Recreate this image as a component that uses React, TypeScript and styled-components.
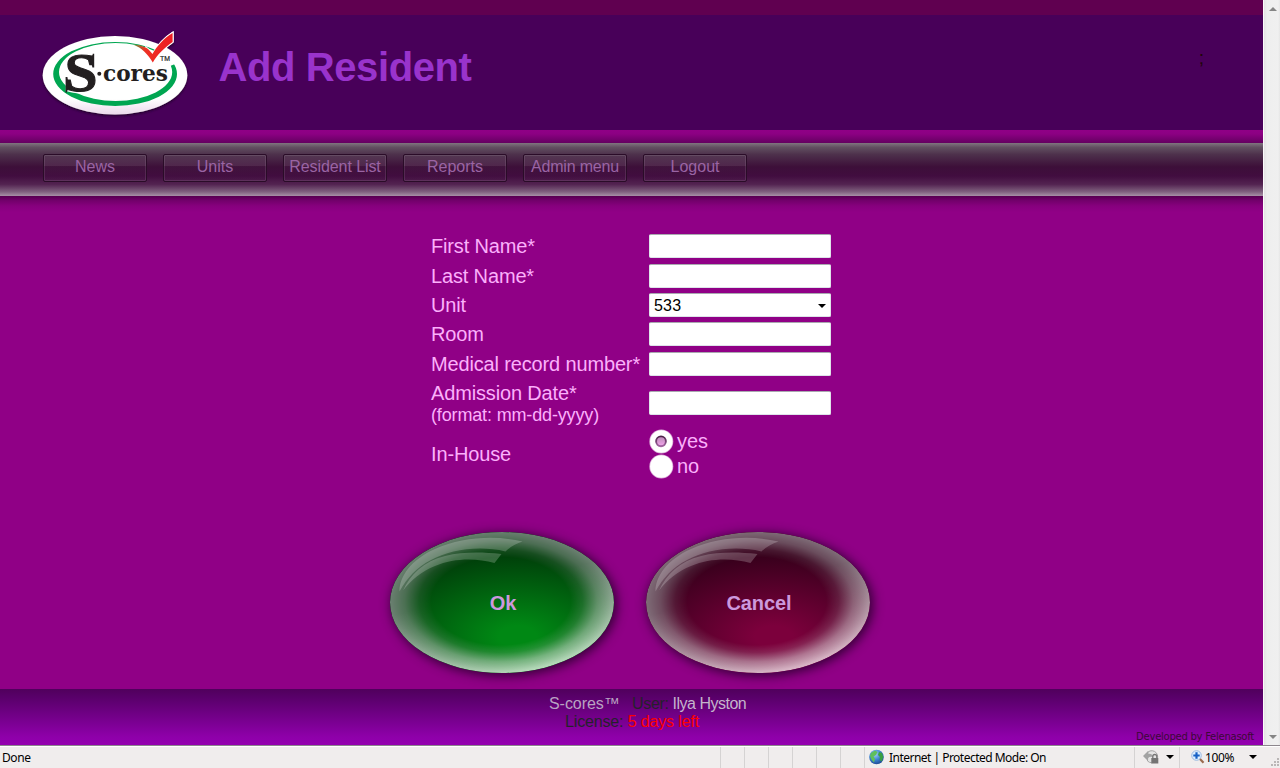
import React from "react";
import styled, { createGlobalStyle } from "styled-components";

const Global = createGlobalStyle`
  * { box-sizing: border-box; }
  body { margin: 0; overflow: hidden; background: #900086; font-family: "Liberation Sans", Arial, sans-serif; }
  button, input { font-family: inherit; padding: 0; margin: 0; }
`;

const Window = styled.div`
  display: flex;
  flex-direction: column;
  width: 1280px;
  height: 768px;
  overflow: hidden;
`;
const Viewport = styled.div`
  display: flex;
  height: 745px;
`;
const Page = styled.div`
  display: flex;
  flex-direction: column;
  width: 1263px;
  background: #900086;
`;
const TopStripe = styled.div`
  height: 15px;
  background: #600050;
`;
const Header = styled.header`
  display: flex;
  height: 115px;
  background: #480059;
  padding: 5px 59px 0 30px;
`;
const Title = styled.h1`
  margin: 24px 0 0 8.5px;
  flex: 1;
  font-size: 40px;
  line-height: 46px;
  letter-spacing: -0.4px;
  color: #9933cc;
`;
const Mark = styled.span`
  margin-top: 28px;
  font-size: 19px;
  line-height: 20px;
  color: #200608;
`;
const HeaderShade = styled.div`
  height: 13px;
  background: linear-gradient(#900086 0%, #8c0083 30%, #640060 100%);
`;
const Nav = styled.nav`
  display: flex;
  gap: 16px;
  height: 53px;
  padding: 11px 0 0 43px;
  background: linear-gradient(#80757f 0%, #625061 8%, #4d304b 22%, #3d0f39 45%, #410d3f 62%, #532351 78%, #7f617e 92%, #a892a7 100%);
`;
const NavButton = styled.button<{ $tight?: number }>`
  width: 104px;
  height: 28px;
  border: 1px solid #2a0c28;
  border-radius: 2px;
  background: linear-gradient(rgba(255, 255, 255, 0.04) 0%, rgba(255, 255, 255, 0.09) 42%, rgba(255, 255, 255, 0.02) 43%, rgba(255, 255, 255, 0) 100%);
  background-clip: padding-box;
  box-shadow: inset 0 0 0 1px rgba(255, 255, 255, 0.1);
  color: #9a64a4;
  font-size: 16px;
  line-height: 20px;
  padding: 0 0 3px 0;
  white-space: nowrap;
  letter-spacing: ${(p) => p.$tight ?? 0}px;
`;
const Main = styled.main`
  flex: 1;
  display: flex;
  flex-direction: column;
  background: linear-gradient(#570050 0, #700069 4px, #87007e 10px, #900086 16px);
  padding-top: 35px;
`;
const Form = styled.div`
  width: 400px;
  margin-left: 431px;
`;
const Row = styled.div<{ $h: number }>`
  display: grid;
  grid-template-columns: 218px 182px;
  align-items: center;
  height: ${(p) => p.$h}px;
`;
const Label = styled.label`
  font-size: 20px;
  line-height: 22px;
  letter-spacing: -0.15px;
  color: #fbb0fb;
  white-space: nowrap;
`;
const TallLabel = styled(Label)`
  padding-top: 2px;
`;
const Hint = styled.span`
  display: block;
  font-size: 18px;
  line-height: 22px;
`;
const Field = styled.input`
  width: 182px;
  height: 24px;
  border: 1px solid #dfe3ea;
  border-top-color: #a9a9b0;
  border-radius: 2px;
  background: #fff;
`;
const Select = styled.div`
  display: flex;
  align-items: center;
  justify-content: space-between;
  width: 182px;
  height: 24px;
  padding: 2px 4px 0;
  border: 1px solid #dfe3ea;
  border-top-color: #a9a9b0;
  border-radius: 2px;
  background: #fff;
  color: #000;
  font-size: 16px;
  letter-spacing: 0.2px;
`;
const Caret = styled.i<{ $size?: number; $color?: string }>`
  width: 0;
  height: 0;
  border: ${(p) => p.$size ?? 4}px solid transparent;
  border-bottom: 0;
  border-top-color: ${(p) => p.$color ?? "#000"};
`;
const Radios = styled.div`
  display: flex;
  flex-direction: column;
  padding-bottom: 1px;
`;
const RadioLine = styled.label`
  display: flex;
  align-items: center;
  gap: 3px;
  height: 25px;
  font-size: 20px;
  line-height: 22px;
  color: #fbb0fb;
`;
const Actions = styled.div`
  display: flex;
  gap: 32px;
  margin: 51px 0 0 390px;
`;
const Oval = styled.button<{ $lit: string; $dark: string; $rim: string; $foot: string }>`
  display: grid;
  place-items: center;
  width: 224px;
  height: 141px;
  border: 0;
  border-radius: 50%;
  background: radial-gradient(ellipse 70% 62% at 57% 74%, ${(p) => p.$lit} 0%, ${(p) => p.$lit} 12%, ${(p) => p.$dark} 92%);
  box-shadow: 2px 2px 11px 1px rgba(35, 0, 40, 0.85);
  color: #cc99dd;
  font-size: 20px;
  font-weight: bold;

  &::before {
    content: "";
    grid-area: 1 / 1;
    width: 224px;
    height: 141px;
    border-radius: 50%;
    background: linear-gradient(165deg, ${(p) => p.$rim} 42%, ${(p) => p.$foot} 92%);
    mask-image: radial-gradient(ellipse 50% 50% at 49.5% 49%, transparent 62%, rgba(0, 0, 0, 0.2) 73%, rgba(0, 0, 0, 0.65) 86%, rgba(0, 0, 0, 0.95) 100%);
  }
  > svg, > span { grid-area: 1 / 1; z-index: 1; }
  > span { padding: 2px 0 0 2px; letter-spacing: -0.1px; }
`;
const PageFooter = styled.footer`
  display: grid;
  grid-template-columns: 1fr;
  height: 56px;
  background: linear-gradient(#50005c, #59006a 15%, #8e00a9 85%, #9400b0);
  font-size: 16px;
  line-height: 18px;
`;
const FooterText = styled.div`
  grid-area: 1 / 1;
  padding-top: 6px;
  display: flex;
  flex-direction: column;
`;
const FooterLine = styled.div<{ $x: number }>`
  padding-left: ${(p) => p.$x}px;
  color: #26202c;
  white-space: pre;
  letter-spacing: -0.15px;
`;
const Tint = styled.span<{ $c: string; $space?: number }>`
  color: ${(p) => p.$c};
  letter-spacing: ${(p) => p.$space ?? -0.15}px;
`;
const UserLabel = styled.span`
  letter-spacing: -0.35px;
`;
const Credit = styled.div`
  grid-area: 1 / 1;
  align-self: end;
  justify-self: end;
  padding-right: 9px;
  font-family: "DejaVu Sans", sans-serif;
  font-size: 10px;
  line-height: 16px;
  letter-spacing: -0.25px;
  color: #3c0838;
`;
const Scrollbar = styled.div`
  display: flex;
  flex-direction: column;
  justify-content: space-between;
  align-items: center;
  width: 17px;
  padding: 7px 0 6px 1px;
  border-left: 1px solid #fbfbfb;
  background: linear-gradient(90deg, #e3e3e3, #eeeeee 3px, #f0f0f0 14px, #e6e6e6);
`;
const Status = styled.div`
  display: flex;
  align-items: center;
  height: 23px;
  border-top: 1px solid #8d878d;
  background: #f0eded;
  box-shadow: inset 0 1px #fff;
  color: #000;
  font-family: "Noto Sans", "Open Sans", sans-serif;
  font-size: 12px;
  white-space: nowrap;
`;
const StatusCell = styled.div<{ $w: number; $gap?: number; $pad?: number; $line?: boolean }>`
  display: flex;
  flex-shrink: 0;
  align-items: center;
  gap: ${(p) => p.$gap ?? 0}px;
  width: ${(p) => p.$w}px;
  height: 21px;
  padding-left: ${(p) => p.$pad ?? 0}px;
  border-right: ${(p) => (p.$line === false ? "0" : "1px solid #d5d3d3")};
`;
const StatusText = styled.span<{ $space: number }>`
  letter-spacing: ${(p) => p.$space}px;
  line-height: 18px;
  padding-top: 2px;
`;
const ZoomLevel = styled(StatusText)`
  width: 44px;
`;

const Logo = () => (
  <svg width="180" height="110" viewBox="0 0 180 110">
    <defs>
      <linearGradient id="lg" x1="0" y1="0" x2="0" y2="1">
        <stop offset="0.8" stopColor="#fff" />
        <stop offset="1" stopColor="#ecd9ec" />
      </linearGradient>
      <linearGradient id="tick" x1="0" y1="0" x2="1" y2="0">
        <stop offset="0" stopColor="#5b9a3c" />
        <stop offset="0.3" stopColor="#ee3224" />
        <stop offset="1" stopColor="#ed1c24" />
      </linearGradient>
      <filter id="sh" x="-10%" y="-10%" width="120%" height="130%">
        <feDropShadow dx="0" dy="1.5" stdDeviation="1.2" floodColor="#170020" floodOpacity="0.8" />
      </filter>
    </defs>
    <g filter="url(#sh)">
      <ellipse cx="85" cy="55.2" rx="72.3" ry="39.3" fill="url(#lg)" />
      <path d="M118 31 L122.5 33 C127 26 134 17 143.6 11 V22.5 C137 27 131 32 126 38 Z" fill="#fff" />
    </g>
    <path fillRule="evenodd" fill="#00a651" d="M23.2 54 A61.9 32 0 0 1 147 54 A61.9 32 0 0 1 23.2 54 Z M29 52 A56.6 28.9 0 0 0 142.2 52 A56.6 28.9 0 0 0 29 52 Z" />
    <path d="M124 42 L130 25 L136 28 L147 37 L149 42.5 L140 46 Z" fill="#fff" />
    <path d="M115 27 C117 28 119 30 122.5 34.5 C127 26 134 18 142.6 12.8 V21.5 C134 28 127 35 122.8 42.3 C120 37 118 33 114 29.5" fill="none" stroke="#fff" strokeWidth="2" />
    <path d="M103 24.6 C110 25 116 27 119 30 L122.5 34 C127 26 134 18 142.6 13 V22 C134 28 127 35 122.8 42.6 C118 34.5 112 28 103 24.6 Z" fill="url(#tick)" />
    <text x="34.5" y="71" fontFamily="Liberation Serif, serif" fontWeight="bold" fontSize="55" textLength="33" lengthAdjust="spacingAndGlyphs" fill="#231f20" stroke="#fff" strokeWidth="3.4">S</text>
    <text x="34.5" y="71" fontFamily="Liberation Serif, serif" fontWeight="bold" fontSize="55" textLength="33" lengthAdjust="spacingAndGlyphs" fill="#231f20" stroke="#231f20" strokeWidth="1.1">S</text>
    <path d="M35.6 72.5 V57 H37.4 C38 62 39.5 65 42 68 L39 68.5 C37.8 69 37.3 70.5 37 72.5 Z M64.2 33.8 V47.5 H62.4 C61.8 43 60 40 57.5 37.5 L61 37 C62.2 36.2 62.6 35.2 62.8 33.8 Z" fill="#231f20" />
    <circle cx="69.3" cy="53.7" r="2" fill="#231f20" />
    <text x="73" y="60.8" fontFamily="DejaVu Serif, serif" fontWeight="bold" fontSize="21.5" textLength="65" lengthAdjust="spacingAndGlyphs" fill="#231f20">cores</text>
    <text x="130" y="41.3" fontFamily="Liberation Sans, sans-serif" fontSize="6.5" textLength="10" lengthAdjust="spacingAndGlyphs" fill="#231f20" stroke="#231f20" strokeWidth="0.2">TM</text>
  </svg>
);

const Gloss = () => (
  <svg width="224" height="141" viewBox="0 0 224 141" fill="#fff" fillOpacity="0.21">
    <path d="M9.5 59.5 C9 46 20 28 45 17 C72 5 105 3 132.5 9.5 C126 11.5 120 15 115.5 19.5 C88 13 60 18 41 28 C27 35 17 46 9.5 59.5 Z" />
    <path d="M13 58.5 C20 43 34 29 55 24 C73 19.5 92 20 111.5 22 L104.5 31 C86 26 64 26 45 34 C32 39 21 48 13 58.5 Z" />
  </svg>
);

const RadioDot = ({ on }: { on?: boolean }) => (
  <svg width="25" height="25" viewBox="0 0 25 25">
    <circle cx="12.3" cy="12.5" r="12" fill="#d8a4d5" />
    <circle cx="12.3" cy="12.5" r="11.2" fill="#fff" />
    {on && (
      <>
        <defs>
          <linearGradient id="dot" x1="0" y1="0" x2="0" y2="1">
            <stop offset="0" stopColor="#b98ab5" />
            <stop offset="1" stopColor="#f3a5ee" />
          </linearGradient>
          <linearGradient id="ring" x1="0" y1="0" x2="0" y2="1">
            <stop offset="0" stopColor="#4c2149" />
            <stop offset="1" stopColor="#a164a0" />
          </linearGradient>
        </defs>
        <circle cx="12" cy="12.3" r="4.9" fill="url(#dot)" stroke="url(#ring)" strokeWidth="1.9" />
      </>
    )}
  </svg>
);

const Globe = () => (
  <svg width="16" height="16" viewBox="0 0 16 16">
    <defs>
      <radialGradient id="sea" cx="0.4" cy="0.3" r="0.8">
        <stop offset="0" stopColor="#a9d6fa" />
        <stop offset="0.5" stopColor="#3c82d2" />
        <stop offset="1" stopColor="#163d83" />
      </radialGradient>
    </defs>
    <circle cx="7.5" cy="8" r="7.3" fill="url(#sea)" />
    <path d="M2 4 L6 1.5 L8.5 3 L7 6 L4.5 7.5 L6 10 L5 13.5 L2.5 10.5 L1 7 Z" fill="#5fbf5c" />
    <path d="M10 3 L13 4 L14.3 8 L12.5 12.5 L10.5 10.5 L11 8 L9 6 Z" fill="#37a043" />
  </svg>
);

const PrivacyIcon = () => (
  <svg width="17" height="16" viewBox="0 0 17 16">
    <path d="M5 3 A6 6 0 1 1 4.5 12 Z" fill="#e4e4e4" stroke="#a5a5a5" />
    <path d="M0 7 L5 2 V5 Q9 4 10 8 Q7 7 5 9 V12 Z" fill="#a3a3a3" />
    <path d="M9.8 9 V7.5 A2 2 0 0 1 13.8 7.5 V9" fill="none" stroke="#777" strokeWidth="1.3" />
    <rect x="8.3" y="9" width="7" height="5.5" fill="#747474" />
  </svg>
);

const ZoomIcon = () => (
  <svg width="14" height="14" viewBox="0 0 14 14">
    <path d="M8.5 8.5 L12.5 12.7" stroke="#9b6b4e" strokeWidth="2.2" />
    <circle cx="5.5" cy="5.5" r="4.8" fill="#dceeff" stroke="#9dbbe0" />
    <path d="M5.5 2.3 V8.7 M2.3 5.5 H8.7" stroke="#1761c5" strokeWidth="2.2" />
  </svg>
);

const GripIcon = styled.svg`
  align-self: flex-end;
  margin-left: auto;
  flex-shrink: 0;
`;
const Grip = () => (
  <GripIcon width="10" height="10" viewBox="0 0 10 10" fill="#bab6b6">
    {[[7, 0], [4, 3], [7, 3], [1, 6], [4, 6], [7, 6]].map(([x, y]) => (
      <rect key={`${x}-${y}`} x={x} y={y} width="2" height="2" />
    ))}
  </GripIcon>
);

const ArrowUp = () => (
  <svg width="8" height="4" viewBox="0 0 8 4"><path d="M0 4 L4 0 L8 4 Z" fill="#858585" /></svg>
);

const nav: { text: string; tight?: number }[] = [
  { text: "News" },
  { text: "Units" },
  { text: "Resident List", tight: -0.08 },
  { text: "Reports" },
  { text: "Admin menu", tight: -0.18 },
  { text: "Logout" },
];

export default function App() {
  return (
    <Window>
      <Global />
      <Viewport>
        <Page>
          <TopStripe />
          <Header>
            <Logo />
            <Title>Add Resident</Title>
            <Mark>;</Mark>
          </Header>
          <HeaderShade />
          <Nav>
            {nav.map((n) => (
              <NavButton key={n.text} $tight={n.tight}>{n.text}</NavButton>
            ))}
          </Nav>
          <Main>
            <Form>
              <Row $h={30}><Label>First Name*</Label><Field /></Row>
              <Row $h={30}><Label>Last Name*</Label><Field /></Row>
              <Row $h={28}><Label>Unit</Label><Select>533<Caret /></Select></Row>
              <Row $h={30}><Label>Room</Label><Field /></Row>
              <Row $h={30}><Label>Medical record number*</Label><Field /></Row>
              <Row $h={48}>
                <TallLabel>Admission Date*<Hint>(format: mm-dd-yyyy)</Hint></TallLabel>
                <Field />
              </Row>
              <Row $h={54}>
                <Label>In-House</Label>
                <Radios>
                  <RadioLine><RadioDot on />yes</RadioLine>
                  <RadioLine><RadioDot />no</RadioLine>
                </Radios>
              </Row>
            </Form>
            <Actions>
              <Oval $lit="#008814" $dark="#00400a" $rim="#74857a" $foot="#c4e6c8"><Gloss /><span>Ok</span></Oval>
              <Oval $lit="#7c003c" $dark="#38001c" $rim="#85757f" $foot="#e6c4d4"><Gloss /><span>Cancel</span></Oval>
            </Actions>
          </Main>
          <PageFooter>
            <FooterText>
              <FooterLine $x={549}><Tint $c="#b9a3c2" $space={-0.05}>S-cores™</Tint><UserLabel>{"   "}User: </UserLabel><Tint $c="#c4b4cc" $space={-0.5}>Ilya Hyston</Tint></FooterLine>
              <FooterLine $x={565}>License: <Tint $c="#ff0000">5 days left</Tint></FooterLine>
            </FooterText>
            <Credit>Developed by Felenasoft</Credit>
          </PageFooter>
        </Page>
        <Scrollbar><ArrowUp /><Caret $color="#858585" /></Scrollbar>
      </Viewport>
      <Status>
        <StatusCell $w={721} $pad={2}><StatusText $space={-0.4}>Done</StatusText></StatusCell>
        <StatusCell $w={24} />
        <StatusCell $w={24} />
        <StatusCell $w={24} />
        <StatusCell $w={24} />
        <StatusCell $w={24} />
        <StatusCell $w={24} />
        <StatusCell $w={270} $pad={4} $gap={4}><Globe /><StatusText $space={-0.52}>Internet | Protected Mode: On</StatusText></StatusCell>
        <StatusCell $w={45} $pad={8} $gap={6}><PrivacyIcon /><Caret /></StatusCell>
        <StatusCell $w={88} $pad={11} $line={false}><ZoomIcon /><ZoomLevel $space={-0.4}>100%</ZoomLevel><Caret /></StatusCell>
        <Grip />
      </Status>
    </Window>
  );
}
